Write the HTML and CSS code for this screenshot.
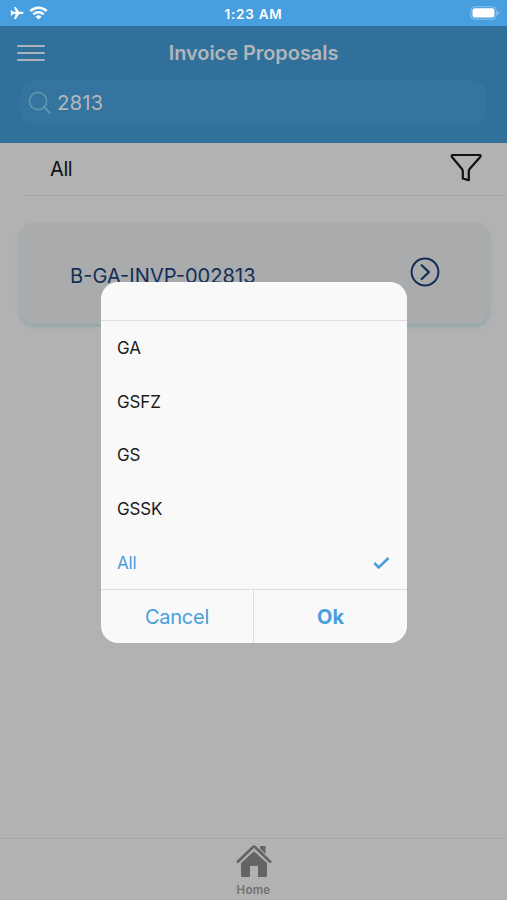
FILE: index.html
```html
<!DOCTYPE html>
<html lang="en">
<head>
<meta charset="utf-8">
<title>Invoice Proposals</title>
<link rel="stylesheet" href="styles.css">
</head>
<body>
<div class="app">
  <div class="status">
    <div class="signals">
      <svg width="14" height="14" viewBox="0 0 14 14"><path fill="#fff" d="M13.6 6.900c0-.6-.8-1.100-1.600-1.100H9.200L5.700 1H4l1.700 4.800H3L1.700 4.200H.5L1.200 6.900.5 9.600h1.200L3 8h2.700L4 12.900h1.700L9.200 8H12c.8 0 1.600-.5 1.600-1.100z"/></svg>
      <svg width="19" height="14" viewBox="0 0 19 14"><g fill="none" stroke="#fff" stroke-width="2.500"><path d="M1.300 5.100a12 12 0 0 1 16.400 0"/><path d="M4.300 8.400a7.600 7.600 0 0 1 10.400 0"/></g><path fill="#fff" d="M9.500 13.600 6.500 10.700a4.300 4.300 0 0 1 6 0z"/></svg>
    </div>
    <div class="time">1:23 AM</div>
    <svg class="battery" width="30" height="14" viewBox="0 0 30 14"><rect x=".8" y=".7" width="25.500" height="12.500" rx="3.800" fill="none" stroke="#8dc4ec"/><rect x="2.500" y="2.300" width="22" height="9.300" rx="2.300" fill="#fff"/><path d="M27.500 5v4c2-.6 2-3.400 0-4z" fill="#8dc4ec"/></svg>
  </div>
  <header class="header">
    <div class="bar">
      <div class="menu"><i></i><i></i><i></i></div>
      <h1 class="title">Invoice Proposals</h1>
    </div>
    <div class="search">
      <svg width="24" height="24" viewBox="0 0 24 24"><g fill="none" stroke="#5e96ae" stroke-width="1.600"><circle cx="10" cy="10" r="8.600"/><path d="m16 16 6.500 6.500" stroke-width="2"/></g></svg>
      <span>2813</span>
    </div>
  </header>
  <div class="filter">
    <span>All</span>
    <svg width="34" height="30" viewBox="0 0 34 30"><path fill="none" stroke="#111" stroke-width="2.200" stroke-linejoin="round" d="M3.500 2H31q1 .5.400 1.700L20.800 15.800Q19.800 17 19.800 18.500v8.700l-6-1.800V18.500q0-1.500-1-2.700L2.800 3.700Q2.300 2.400 3.500 2z"/></svg>
  </div>
  <div class="card">
    <span>B-GA-INVP-002813</span>
    <svg width="30" height="30" viewBox="0 0 30 30"><g fill="none" stroke="#132f58" stroke-width="2"><circle cx="15" cy="15" r="13.400"/><path d="m11.700 8.200 7.200 6.900-7.200 6.900" stroke-width="2.200" stroke-linecap="round" stroke-linejoin="round"/></g></svg>
  </div>
  <nav class="tabs">
    <svg width="36" height="34" viewBox="0 0 36 34"><g fill="#646464"><path d="M24 2h5.500v11L24 7.200z"/><path d="M18 7.200 31 19v12.500q0 1.500-1.500 1.500H22V22h-8v11H6.500Q5 33 5 31.500V19z"/></g><path d="M1.800 17.700 16.800 3.200q1.200-1.100 2.400 0l15 14.500" fill="none" stroke="#b2b2b2" stroke-width="4.500"/><path d="M1.800 17.700 16.800 3.200q1.200-1.100 2.400 0l15 14.500" fill="none" stroke="#646464" stroke-width="2.600" stroke-linecap="round"/></svg>
    <span>Home</span>
  </nav>
  <div class="dialog">
    <div class="dialog-head"></div>
    <ul class="options">
      <li>GA</li>
      <li>GSFZ</li>
      <li>GS</li>
      <li>GSSK</li>
      <li class="selected">All <svg width="17" height="14" viewBox="0 0 17 14"><path fill="none" stroke="#489fdc" stroke-width="2.600" d="m1.300 7 4.400 4.400L15.500 2"/></svg></li>
    </ul>
    <div class="actions">
      <button>Cancel</button>
      <button class="ok">Ok</button>
    </div>
  </div>
</div>
</body>
</html>
```

FILE: styles.css
```css
* { box-sizing: border-box; }
body { margin: 0; font-family: Inter, "Liberation Sans", sans-serif; }
.app { position: relative; width: 507px; height: 900px; display: flex; flex-direction: column; background: #b2b2b2; overflow: hidden; }
.status { height: 26px; flex: none; display: grid; grid-template-columns: 1fr auto 1fr; align-items: center; padding: 0 7px 0 10px; background: #489fdf; color: #fff; }
.signals { display: flex; align-items: center; gap: 5px; }
.time { margin-right: 3px; font-size: 13.5px; font-weight: 600; letter-spacing: 0.75px; padding-top: 1px; }
.battery { justify-self: end; }
.header { height: 117px; flex: none; background: #30709b; color: #b2b6ba; }
.bar { height: 54px; display: grid; grid-template-columns: 1fr auto 1fr; align-items: center; padding: 0 17px; }
.menu { display: flex; flex-direction: column; gap: 4.5px; width: 28px; }
.menu i { height: 2.5px; border-radius: 1px; background: #acb3b9; }
.title { margin: 0; font-size: 19.9px; font-weight: 600; line-height: 26px; }
.search { height: 43px; margin: 1px 21px; padding: 0 7px; display: flex; align-items: center; gap: 5px; border-radius: 12px; background: #34749e; box-shadow: 0 0 3px #34749e; font-size: 20.5px; }
.filter { height: 53px; flex: none; margin-left: 24px; padding: 0 24px 2px 26px; display: flex; align-items: center; justify-content: space-between; border-bottom: 1px solid #a6a6a6; font-size: 20px; letter-spacing: -0.4px; color: #111; }
.filter span { padding-top: 1px; }
.card { height: 101px; flex: none; margin: 27px 18px 0 20px; padding: 2px 49px 0 50px; display: flex; align-items: center; justify-content: space-between; border-radius: 14px; background: #aaabad; box-shadow: 0 2px 4px #84a3aa; font-size: 20.1px; color: #132f58; }
.card span { padding-top: 3px; }
.card svg { margin-bottom: 5px; }
.tabs { height: 62px; flex: none; margin-top: auto; padding-top: 5px; display: flex; flex-direction: column; align-items: center; border-top: 1px solid #a6a6a6; color: #707070; font-size: 11.5px; font-weight: 600; letter-spacing: 0.3px; }
.tabs span { margin-top: 5px; line-height: 14px; }
.dialog { position: absolute; left: 101px; top: 282px; width: 306px; height: 361px; display: flex; flex-direction: column; border-radius: 17px; background: #f9f9f9; overflow: hidden; }
.dialog-head { height: 39px; border-bottom: 1px solid #dedfdf; }
.options { list-style: none; margin: 0; padding: 0; flex: 1; font-size: 17px; letter-spacing: -0.15px; color: #1c1c1c; }
.options li { height: 53.7px; padding: 1px 16px 0; display: flex; align-items: center; justify-content: space-between; }
.options .selected { color: #489fdc; }
.options svg { margin-right: 1px; }
.actions { height: 54.5px; display: grid; grid-template-columns: 152px 1fr; border-top: 1px solid #dedede; }
.actions button { border: 0; padding: 0; background: none; font: inherit; font-size: 20px; letter-spacing: -0.25px; color: #489fdc; }
.actions .ok { border-left: 1px solid #dedede; font-weight: 700; letter-spacing: 0; }
```
